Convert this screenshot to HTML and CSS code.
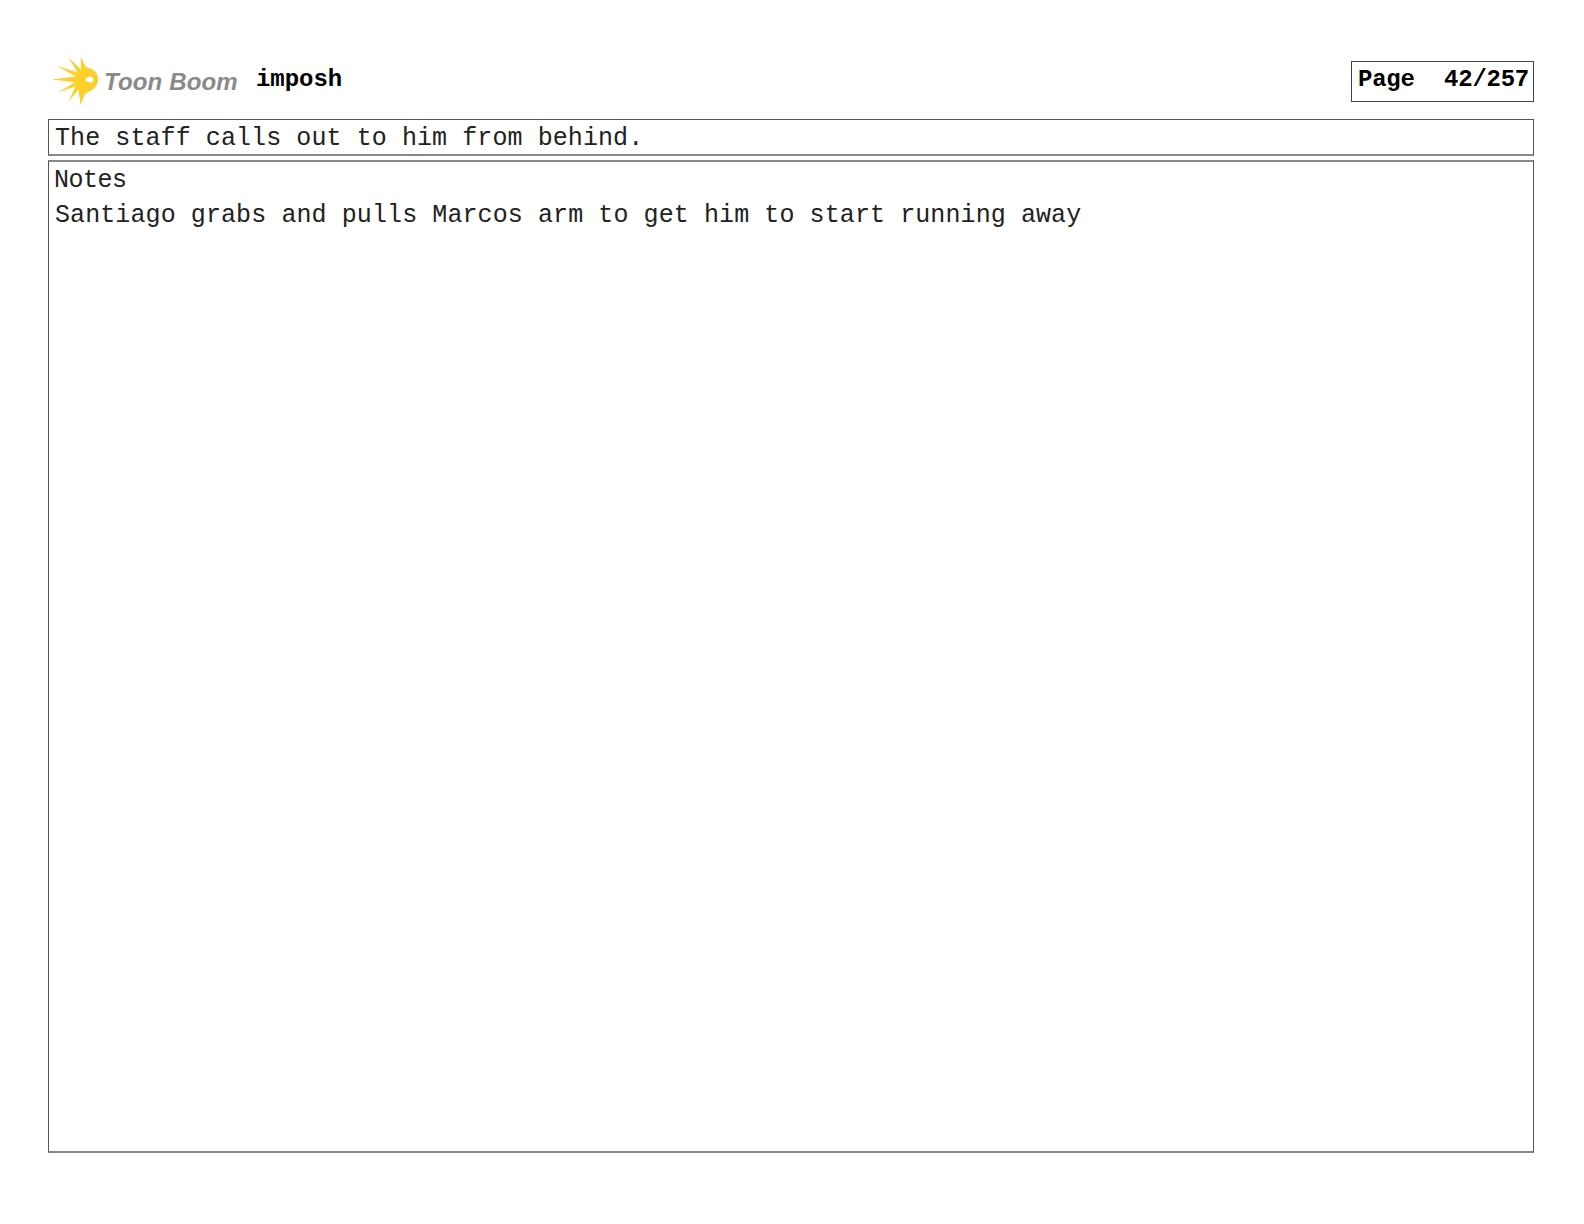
FILE: index.html
```html
<!DOCTYPE html>
<html lang="en">
<head>
<meta charset="utf-8">
<title>imposh - Page 42/257</title>
<link rel="stylesheet" href="styles.css">
</head>
<body>
<main class="sheet">
  <header class="top">
    <div class="brand">
      <svg class="burst" viewBox="15 15 150 155" aria-hidden="true">
        <path class="burst-fill" d="M20 88 L92 79 L35 47 L98 67 L70 22 L108 58 L107 20 L122 50 Q160 60 160 88 Q158 116 120 130 L107 165 L100 118 L70 155 L92 108 L38 128 L90 96 Z"/>
        <path class="burst-eye" d="M122 84 L136 78 Q146 82 146 88 Q146 95 136 98 L122 92 Z"/>
      </svg>
      <span class="logotype">Toon Boom</span>
    </div>
    <h1 class="project">imposh</h1>
    <div class="page-box"><span>Page</span><span>42/257</span></div>
  </header>
  <section class="caption">The staff calls out to him from behind.</section>
  <section class="notes">
    <div class="notes-label">Notes</div>
    <p class="notes-text">Santiago grabs and pulls Marcos arm to get him to start running away</p>
  </section>
</main>
</body>
</html>
```
FILE: styles.css
```css
* { box-sizing: border-box; }
html, body { margin: 0; padding: 0; background: #fff; }
body { font-family: "Liberation Mono", "Courier New", monospace; color: #222; }
.sheet { width: 1584px; height: 1224px; padding: 56px 50px 0 48px; display: flex; flex-direction: column; }
.top { height: 50px; display: flex; align-items: center; margin-bottom: 13px; }
.brand { display: flex; align-items: center; width: 208px; padding-left: 2px; }
.burst { width: 50px; height: 52px; flex: none; }
.burst-fill { fill: #fcd02a; }
.burst-eye { fill: #fff; }
.logotype { font: italic bold 24px "Liberation Sans", Arial, sans-serif; color: #8a8a8a; margin-left: 4px; margin-top: 2px; white-space: nowrap; letter-spacing: 0.15px; }
.project { margin: 0 0 4px; font-size: 24px; font-weight: 700; color: #000; letter-spacing: -0.05px; flex: 1; }
.page-box { width: 183px; height: 41px; border: 1px solid #444; display: flex; justify-content: space-between; align-items: center; padding: 0 4px 4px 6px; font-size: 24px; font-weight: 700; color: #000; letter-spacing: -0.25px; }
.caption { height: 37px; border: 1px solid #555; border-bottom: 2px solid #888; padding-left: 6px; font-size: 25px; line-height: 37px; letter-spacing: 0.08px; white-space: nowrap; }
.notes { margin-top: 4px; height: 993px; border: 1px solid #555; border-top: 2px solid #888; border-bottom: 2px solid #888; padding-left: 6px; font-size: 25px; }
.notes-label { line-height: 38px; margin-left: -1px; letter-spacing: -0.5px; }
.notes-text { margin: 0; line-height: 32px; letter-spacing: 0.09px; white-space: nowrap; }
```
